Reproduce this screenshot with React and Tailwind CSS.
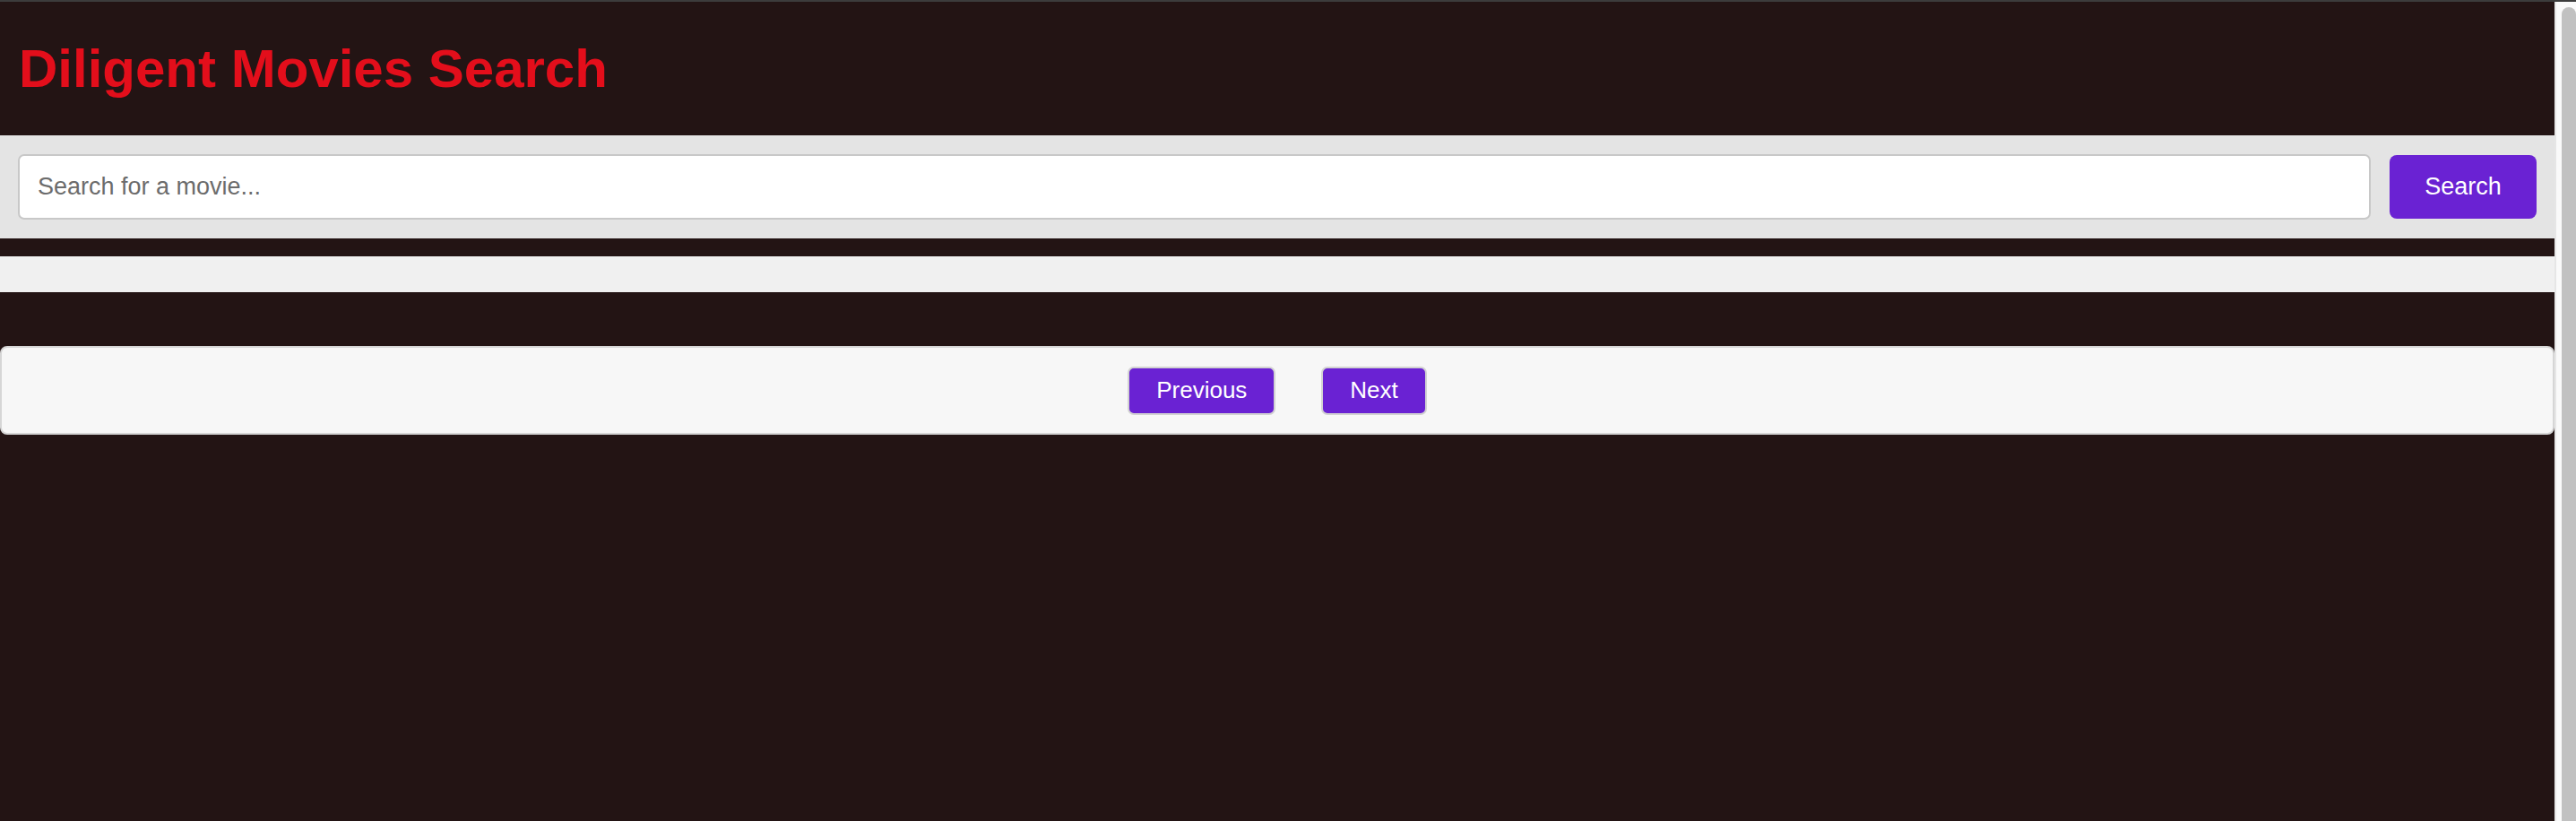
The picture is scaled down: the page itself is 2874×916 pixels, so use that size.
import React from "react";

export default function App() {
  return (
    <div className="flex h-[916px] w-full flex-col overflow-hidden bg-[#231414] font-['Liberation_Sans',Arial,sans-serif]">
      <div className="h-[2px] w-full bg-[#3c3c3c]" />
      <div className="flex flex-1 flex-row">
        <main className="flex w-[2850px] flex-col bg-[#231414]">
          <header className="flex h-[149px] items-center pl-[21px]">
            <h1 className="text-[60px] font-bold leading-none text-[#e30e1b]">
              Diligent Movies Search
            </h1>
          </header>
          <div className="flex h-[115px] items-center gap-[21px] bg-[#e4e4e4] px-[20px]">
            <input
              type="text"
              placeholder="Search for a movie..."
              className="h-[73px] flex-1 rounded-[7px] border-2 border-[#c8c8c8] bg-white pl-[20px] text-[27px] text-black outline-none placeholder:text-[#6c6c6c]"
            />
            <button className="h-[71px] w-[164px] rounded-[8px] bg-[#6a22d3] text-[27px] text-white">
              Search
            </button>
          </div>
          <div className="mt-[20px] h-[40px] bg-[#f0f0f0]" />
          <div className="mt-[60px] flex h-[99px] items-center justify-center gap-[51px] rounded-[8px] border-2 border-[#d6d6d6] bg-[#f7f7f7]">
            <button className="h-[54px] rounded-[7px] border-2 border-[#d2d2d2] bg-[#6a22d3] px-[30px] text-[26px] text-white">
              Previous
            </button>
            <button className="h-[54px] rounded-[7px] border-2 border-[#d2d2d2] bg-[#6a22d3] px-[30px] text-[26px] text-white">
              Next
            </button>
          </div>
        </main>
        <div className="flex w-[24px] flex-row border-l-2 border-[#e6e6e6] bg-[#fafafa] pl-[6px] pt-[6px]">
          <div className="h-full w-[16px] rounded-t-[8px] bg-[#c1c1c1]" />
        </div>
      </div>
    </div>
  );
}
